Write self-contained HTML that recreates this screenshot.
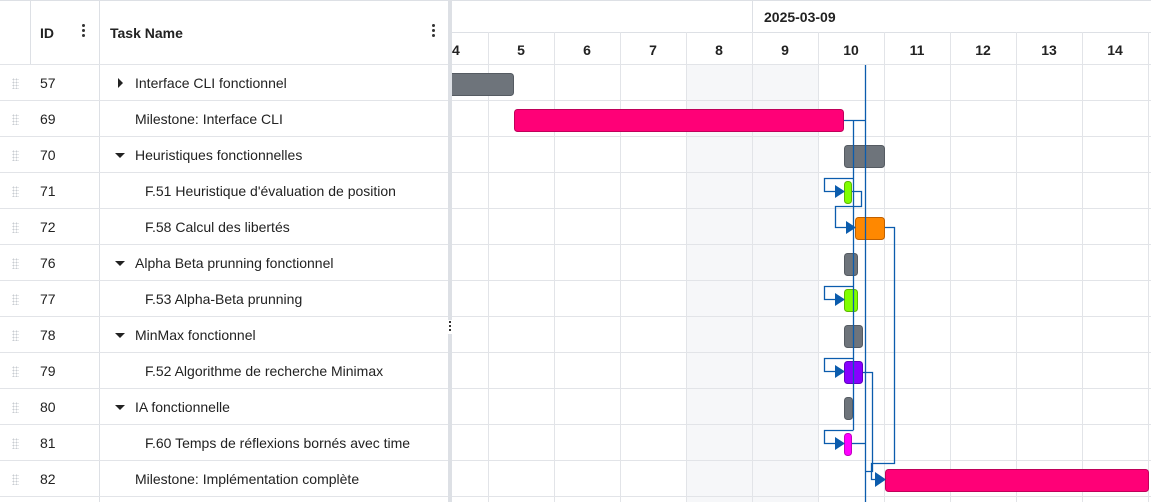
<!DOCTYPE html><html><head><meta charset="utf-8"><style>
*{margin:0;padding:0;box-sizing:border-box}
body{width:1151px;height:502px;overflow:hidden;background:#fff;font-family:"Liberation Sans",sans-serif;color:#222;position:relative}
.a{position:absolute}
.t{font-size:14px;line-height:36px;white-space:nowrap}
.h{font-size:14px;font-weight:bold}
</style></head><body>
<div class="a" style="left:0;top:0;width:1151px;height:1px;background:#dde0e5"></div>
<div class="a" style="left:30px;top:0;width:1px;height:64px;background:#dde0e5"></div>
<div class="a" style="left:99px;top:0;width:1px;height:502px;background:#dde0e5"></div>
<div class="a h" style="left:40px;top:25px">ID</div>
<div class="a h" style="left:110px;top:25px">Task Name</div>
<div class="a" style="left:82px;top:24px;width:3px"><div style="width:3px;height:3px;background:#333;border-radius:2px;margin-bottom:2px"></div><div style="width:3px;height:3px;background:#333;border-radius:2px;margin-bottom:2px"></div><div style="width:3px;height:3px;background:#333;border-radius:2px"></div></div>
<div class="a" style="left:432px;top:24px;width:3px"><div style="width:3px;height:3px;background:#333;border-radius:2px;margin-bottom:2px"></div><div style="width:3px;height:3px;background:#333;border-radius:2px;margin-bottom:2px"></div><div style="width:3px;height:3px;background:#333;border-radius:2px"></div></div>
<div class="a" style="left:452px;top:32px;width:699px;height:1px;background:#dde0e5"></div>
<div class="a" style="left:752px;top:0;width:1px;height:32px;background:#dde0e5"></div>
<div class="a h" style="left:764px;top:9px">2025-03-09</div>
<div class="a" style="left:686px;top:65px;width:132px;height:437px;background:#f6f7f9"></div>
<div id="cols"></div>
<div id="rows"></div>
<svg class="a" style="left:0;top:0" width="1151" height="502">
<g fill="#6e747b" stroke="#555b62" stroke-width="1">
<path d="M452 73.5H510.5A3 3 0 0 1 513.5 76.5V92.5A3 3 0 0 1 510.5 95.5H452"/>
<rect x="844.5" y="145.5" width="40" height="22" rx="3"/>
<rect x="844.5" y="253.5" width="13" height="22" rx="3"/>
<rect x="844.5" y="325.5" width="18" height="22" rx="3"/>
<rect x="844.5" y="397.5" width="8" height="22" rx="3"/>
</g>
<rect x="514.5" y="109.5" width="329" height="22" rx="3" fill="#ff0077" stroke="#c0005a"/>
<rect x="885.5" y="469.5" width="263" height="22" rx="3" fill="#ff0077" stroke="#c0005a"/>
<rect x="844.5" y="181.5" width="7" height="22" rx="3" fill="#80ff00" stroke="#5cb800"/>
<rect x="855.5" y="217.5" width="29" height="22" rx="3" fill="#ff8800" stroke="#c06000"/>
<rect x="844.5" y="289.5" width="13" height="22" rx="3" fill="#80ff00" stroke="#5cb800"/>
<rect x="844.5" y="361.5" width="18" height="22" rx="3" fill="#8800ff" stroke="#6000c0"/>
<rect x="844.5" y="433.5" width="7" height="22" rx="3" fill="#ff00ff" stroke="#c000c0"/>
<g fill="none" stroke="#0b5cad" stroke-width="1.3">
<path d="M865.5 65V502"/>
<path d="M844 120.5H865"/>
<path d="M853.5 120V430"/>
<path d="M853.5 178.5H824.5V191.5H836"/>
<path d="M852 191.5H861.5V206.5H835.5V227.5H847"/>
<path d="M853.5 286.5H824.5V299.5H836"/>
<path d="M853.5 358.5H824.5V371.5H836"/>
<path d="M853.5 430.5H824.5V443.5H836"/>
<path d="M885 227.5H894.5V463.5H871.5V479.5H876"/>
<path d="M863 372.5H872.5V471.5H865.5"/>
<path d="M852 443.5H865"/>
</g>
<g fill="#0b5cad">
<path d="M835 185L845 191.5L835 198Z"/>
<path d="M846 221L856 227.5L846 234Z"/>
<path d="M835 293L845 299.5L835 306Z"/>
<path d="M835 365L845 371.5L835 378Z"/>
<path d="M835 437L845 443.5L835 450Z"/>
<path d="M875 472L886 479.5L875 487Z"/>
</g>
</svg>
<div class="a" style="left:448px;top:0;width:4px;height:502px;background:#dde0e5"></div>
<div class="a" style="left:448px;top:320px;width:4px;height:14px;background:#fff"></div>
<div class="a" style="left:449px;top:321px;width:2px"><div style="width:2px;height:2px;background:#333;margin-bottom:2px"></div><div style="width:2px;height:2px;background:#333;margin-bottom:2px"></div><div style="width:2px;height:2px;background:#333"></div></div>
<script>
var c='',x=[488,554,620,686,752,818,884,950,1016,1082,1148],d=['4','5','6','7','8','9','10','11','12','13','14'];
x.forEach(function(v,i){c+='<div class="a" style="left:'+v+'px;top:32px;width:1px;height:470px;background:#e2e4e8"></div>';
if(i>0)c+='<div class="a h" style="left:'+(v-66)+'px;top:42px;width:66px;text-align:center">'+d[i]+'</div>';});
c+='<div class="a h" style="left:452px;top:42px">4</div>';
document.getElementById('cols').innerHTML=c;
var R=[['57',1,'Interface CLI fonctionnel','r'],['69',1,'Milestone: Interface CLI',''],['70',1,'Heuristiques fonctionnelles','d'],['71',2,"F.51 Heuristique d'évaluation de position",''],['72',2,'F.58 Calcul des libertés',''],['76',1,'Alpha Beta prunning fonctionnel','d'],['77',2,'F.53 Alpha-Beta prunning',''],['78',1,'MinMax fonctionnel','d'],['79',2,'F.52 Algorithme de recherche Minimax',''],['80',1,'IA fonctionnelle','d'],['81',2,'F.60 Temps de réflexions bornés avec time',''],['82',1,'Milestone: Implémentation complète','']];
var s='';
for(var i=0;i<=12;i++){s+='<div class="a" style="left:0;top:'+(64+36*i)+'px;width:1151px;height:1px;background:#e2e4e8"></div>';}
R.forEach(function(r,i){var y=65+36*i;
s+='<div class="a" style="left:12px;top:'+(y+13)+'px;width:7px;height:11px;background:radial-gradient(circle,#c8ccd2 0.8px,transparent 1px) 0 0/3px 3px"></div>';
s+='<div class="a t" style="left:40px;top:'+y+'px">'+r[0]+'</div>';
s+='<div class="a t" style="left:'+(r[1]==1?135:145)+'px;top:'+y+'px">'+r[2]+'</div>';
if(r[3]=='r')s+='<div class="a" style="left:118px;top:'+(y+13)+'px;width:0;height:0;border-top:5px solid transparent;border-bottom:5px solid transparent;border-left:5px solid #222"></div>';
if(r[3]=='d')s+='<div class="a" style="left:115px;top:'+(y+16)+'px;width:0;height:0;border-left:5px solid transparent;border-right:5px solid transparent;border-top:5px solid #222"></div>';
});
document.getElementById('rows').innerHTML=s;
</script>
</body></html>
